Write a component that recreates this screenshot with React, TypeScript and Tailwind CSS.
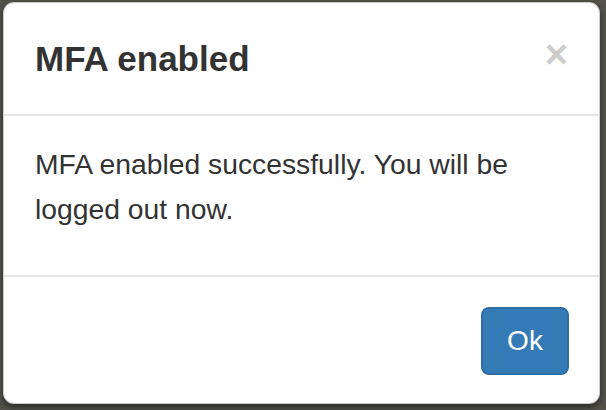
import React from "react";

export default function App() {
  return (
    <div
      className="w-[606px] h-[410px] overflow-hidden bg-[#52524b] pt-[2px] pl-[3px]"
      style={{ fontFamily: '"Liberation Sans", Arial, sans-serif' }}
    >
      {/* Modal */}
      <div className="w-[597px] h-[402px] bg-white rounded-[11px] border border-black/20 shadow-[0_3px_6px_rgba(0,0,0,0.5)] flex flex-col overflow-hidden">
        {/* Header */}
        <div className="h-[113px] shrink-0 flex items-center justify-between pl-[31px] pr-[31px] border-b-2 border-[#e5e5e5]">
          <h4 className="text-[35px] leading-[40px] font-bold text-[#333333]">MFA enabled</h4>
          <button className="text-[40px] leading-[40px] font-bold text-[#cccccc] -mt-[10px]">×</button>
        </div>

        {/* Body */}
        <div className="h-[161px] shrink-0 pt-[26px] pl-[31px] pr-[31px] border-b-2 border-[#e5e5e5]">
          <p className="text-[28.3px] leading-[45px] text-[#333333]">
            MFA enabled successfully. You will be logged out now.
          </p>
        </div>

        {/* Footer */}
        <div className="flex-1 flex justify-end items-start pt-[30px] pr-[30px]">
          <button className="w-[88px] h-[68px] rounded-[8px] bg-[#337ab7] border-2 border-[#2e6da4] text-white text-[28px] leading-none">
            Ok
          </button>
        </div>
      </div>
    </div>
  );
}
